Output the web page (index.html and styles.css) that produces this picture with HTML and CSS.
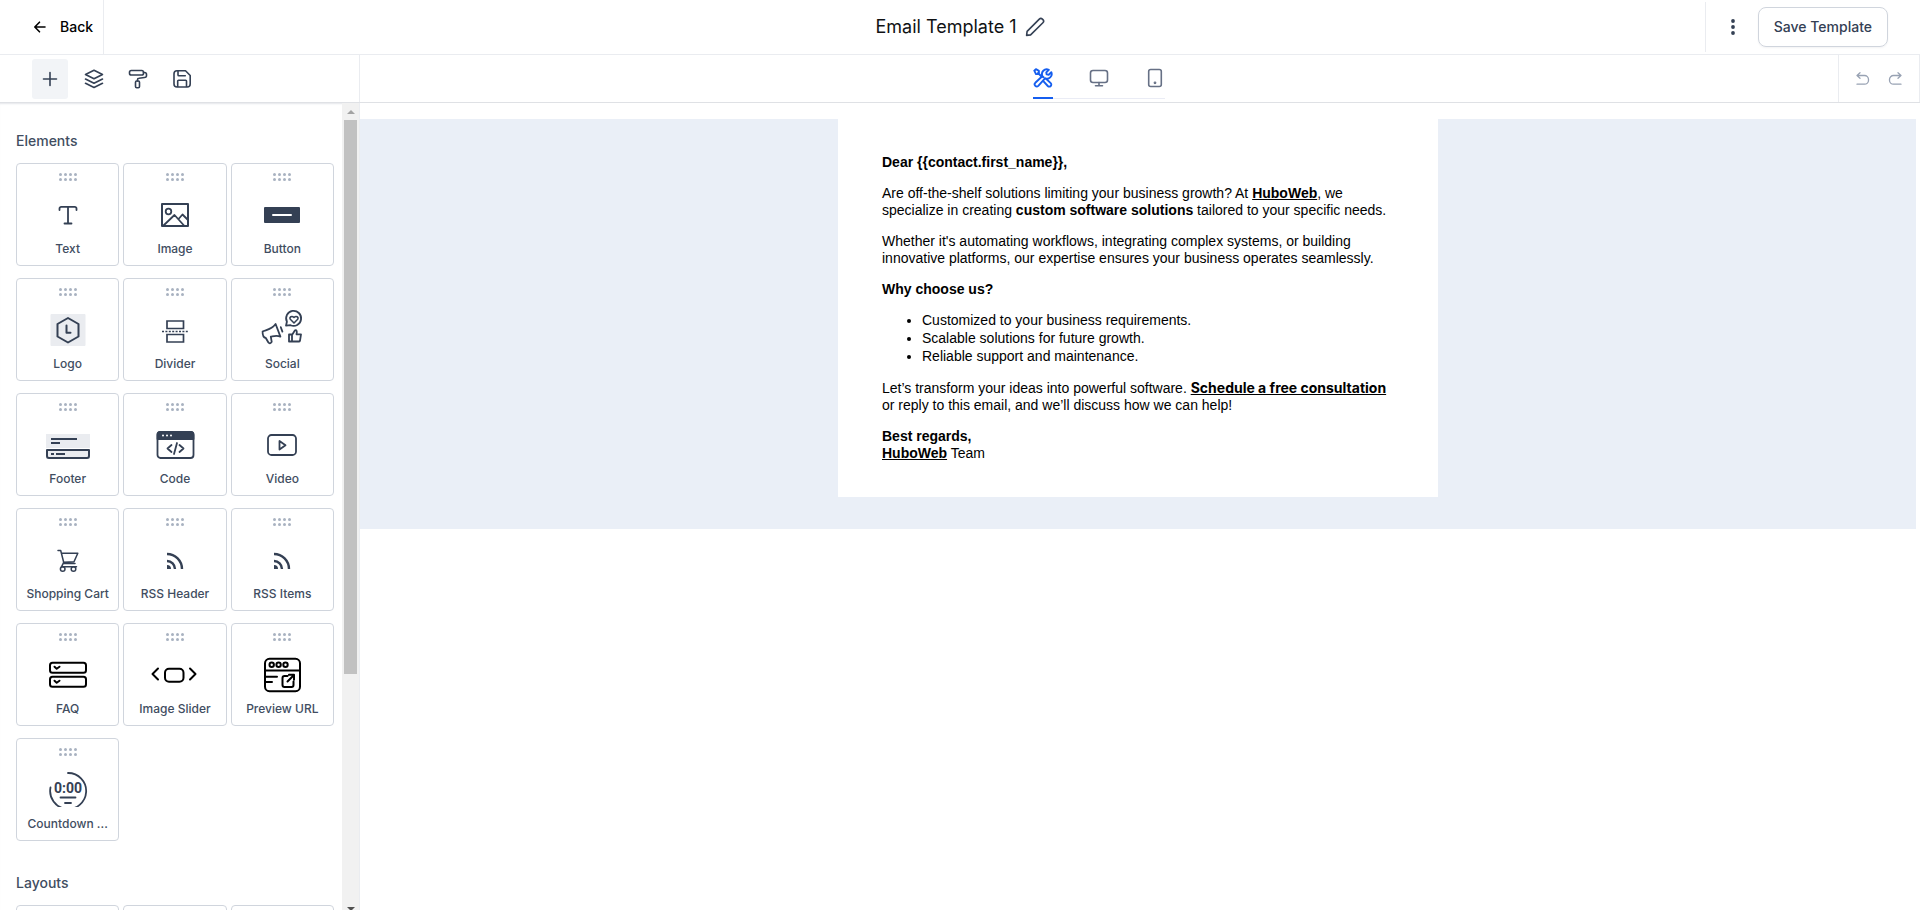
FILE: index.html
```html
<!DOCTYPE html>
<html lang="en">
<head>
<meta charset="utf-8">
<title>Email Template 1</title>
<link rel="stylesheet" href="styles.css">
</head>
<body>
<svg class="sprite" aria-hidden="true">
  <symbol id="grip" viewBox="0 0 20 10">
    <circle cx="2.500" cy="2.500" r="1.500"/><circle cx="7.500" cy="2.500" r="1.500"/><circle cx="12.500" cy="2.500" r="1.500"/><circle cx="17.500" cy="2.500" r="1.500"/>
    <circle cx="2.500" cy="7.500" r="1.500"/><circle cx="7.500" cy="7.500" r="1.500"/><circle cx="12.500" cy="7.500" r="1.500"/><circle cx="17.500" cy="7.500" r="1.500"/>
  </symbol>
  <symbol id="rss" viewBox="0 0 44 36">
    <path d="M14 13A15 15 0 0 1 29 28M14 20A8 8 0 0 1 22 28" stroke-width="2.400" stroke-linecap="butt"/>
    <path d="M14 24A4 4 0 0 1 18 28H14Z" fill="currentColor" stroke="none"/>
  </symbol>
</svg>
<div class="app">
  <header class="topbar">
    <div class="topbar-left">
      <button class="back" type="button">
        <svg width="16" height="16" viewBox="0 0 16 16"><path d="M13 8H3M7.500 3.200L2.800 8l4.700 4.800"/></svg>
        Back
      </button>
    </div>
    <div class="topbar-title">
      <h1>Email Template 1</h1>
      <button class="icon-plain" type="button" aria-label="Rename">
        <svg width="20" height="20" viewBox="0 0 20 20"><path d="M1.600 18.400l.5-4L14.300 2.100a2.200 2.200 0 0 1 3.100 0l.500.5a2.200 2.200 0 0 1 0 3.100L5.600 17.900z"/></svg>
      </button>
    </div>
    <div class="topbar-right">
      <div class="actions">
        <button class="icon-plain" type="button" aria-label="More options">
          <svg class="filled" width="20" height="20" viewBox="0 0 20 20"><circle cx="10" cy="4" r="1.900"/><circle cx="10" cy="10" r="1.900"/><circle cx="10" cy="16" r="1.900"/></svg>
        </button>
        <button class="save" type="button">Save Template</button>
      </div>
    </div>
  </header>

  <div class="toolbar">
    <nav class="tools" aria-label="Panels">
      <button class="tool active" type="button" aria-label="Add element"><svg width="20" height="20" viewBox="0 0 20 20"><path d="M10 3.500v13M3.500 10h13"/></svg></button>
      <button class="tool" type="button" aria-label="Layers"><svg width="20" height="20" viewBox="0 0 20 20"><path d="M10 1.300l8.500 4.200L10 9.700 1.500 5.500zM1.500 10l8.500 4.200L18.500 10M1.500 14.300l8.500 4.200 8.500-4.200"/></svg></button>
      <button class="tool" type="button" aria-label="Styles"><svg width="20" height="20" viewBox="0 0 20 20"><rect x="1.500" y="1.500" width="14" height="4.500" rx="1.800"/><path d="M15.500 3.500h1a2 2 0 0 1 2 2v1a2 2 0 0 1-2 2l-5.500.8a1.500 1.500 0 0 0-1.500 1.500v1.200"/><rect x="7.500" y="12" width="4" height="6.800" rx="1.200"/></svg></button>
      <button class="tool" type="button" aria-label="Saved blocks"><svg width="20" height="20" viewBox="0 0 20 20"><path d="M5 1.800h8.500l4.700 4.700V15a3 3 0 0 1-3 3H5a3 3 0 0 1-3-3V4.800a3 3 0 0 1 3-3zM6 1.800V6a.8.800 0 0 0 .8.800h6.500M5.700 18v-6a.8.800 0 0 1 .8-.8h7.200a.8.800 0 0 1 .8.800v6"/></svg></button>
    </nav>
    <div class="views">
      <div class="tabs" role="tablist">
        <button class="tab active" type="button" role="tab" aria-label="Edit">
          <svg width="20" height="20" viewBox="0 0 20 20"><path d="M5 5l4 4M1.300 2.700l1.600-1.500 3 1.700v2.400l-.8.800H3zM10.500 9.200L9.600 8.300A4.700 4.700 0 0 1 15.800 1.800L13.300 4.300l.3 2.100 2.100.3 2.600-2.500a4.700 4.700 0 0 1-6.300 6.100L5.300 17.800a2 2 0 0 1-3-3L8.700 8.800M12.800 10.500l4.900 4.600a2 2 0 0 1-2.900 2.900l-4.500-4.900"/></svg>
        </button>
        <button class="tab" type="button" role="tab" aria-label="Desktop preview">
          <svg width="20" height="20" viewBox="0 0 20 20"><rect x="1.500" y="2.500" width="17" height="12" rx="2.500"/><path d="M10 14.500v3M6.500 17.700h7"/></svg>
        </button>
        <button class="tab" type="button" role="tab" aria-label="Mobile preview">
          <svg width="20" height="20" viewBox="0 0 20 20"><rect x="3.700" y="1.500" width="12.600" height="17" rx="2"/><circle cx="10" cy="14.800" r=".6"/></svg>
        </button>
      </div>
    </div>
    <div class="history">
      <button class="icon-plain" type="button" aria-label="Undo"><svg width="16" height="16" viewBox="0 0 16 16"><path d="M5 1.800L2 4.500l3 2.700M2 4.500h7.500a4 4 0 0 1 4 4v.700a4 4 0 0 1-4 4H2"/></svg></button>
      <button class="icon-plain" type="button" aria-label="Redo"><svg width="16" height="16" viewBox="0 0 16 16"><path d="M11 1.800l3 2.700-3 2.700M14 4.500H6.500a4 4 0 0 0-4 4v.700a4 4 0 0 0 4 4H14"/></svg></button>
    </div>
  </div>

  <div class="workspace">
    <aside class="sidebar">
      <div class="panel">
        <h2>Elements</h2>
        <div class="grid">
          <button class="card" type="button"><svg class="grip"><use href="#grip"/></svg>
            <svg class="icon" viewBox="0 0 44 36"><path d="M13.500 14v-1.500a1.700 1.700 0 0 1 1.700-1.700h13.600a1.700 1.700 0 0 1 1.700 1.700V14M22 11v16.300M18.500 27.500h7"/></svg>
            <span>Text</span></button>
          <button class="card" type="button"><svg class="grip"><use href="#grip"/></svg>
            <svg class="icon" viewBox="0 0 44 36"><path d="M9 8h26v22H9z" stroke-width="2"/><circle cx="15.500" cy="15.500" r="2.800"/><path d="M10.500 29.500L21.500 19l9.500 10.500M25.500 23l4-4.500 5 5"/></svg>
            <span>Image</span></button>
          <button class="card" type="button"><svg class="grip"><use href="#grip"/></svg>
            <svg class="icon" viewBox="0 0 44 36"><rect x="4" y="11" width="36" height="16" rx="1" fill="currentColor" stroke="none"/><path d="M13 19h18" class="paper"/></svg>
            <span>Button</span></button>

          <button class="card" type="button"><svg class="grip"><use href="#grip"/></svg>
            <svg class="icon" viewBox="0 0 44 36"><rect class="tint" x="4.500" y="3" width="35" height="32" rx="1"/><path d="M22 7l10.500 6v12.500l-10.500 6-10.500-6V13z" stroke-width="2"/><path d="M20.500 14.500v7.200h4" stroke-width="2"/></svg>
            <span>Logo</span></button>
          <button class="card" type="button"><svg class="grip"><use href="#grip"/></svg>
            <svg class="icon" viewBox="0 0 44 36"><path d="M14 10h16.500v7.500H14zM14 23.500h16.500v7.500H14z" stroke-width="1.700" stroke-linejoin="miter"/><path d="M9 20.500h26" stroke-width="1.500" stroke-linecap="butt" stroke-dasharray="2 1.400"/></svg>
            <span>Divider</span></button>
          <button class="card" type="button"><svg class="grip"><use href="#grip"/></svg>
            <svg class="icon" viewBox="0 0 44 36"><path d="M2.600 20.500c3-1.700 8.500-1.500 13-7.500l4.800 12.600c-3.500-1.700-6.500-.6-9.600 0l.9 5.300c-1 1.700-2.500 1.700-3.300.6L5.800 27c-2-.4-3.300-2.600-3.200-6.500zM20.800 16.200l1.600 4.400"/><path d="M26 14.700l.9-4A7.500 7.500 0 1 1 30.500 14.200z"/><path d="M34 12l-3.700-3.700c-1.200-2.100 1.500-4.100 3.700-1.800 2.200-2.300 4.900-.3 3.700 1.800z" stroke-width="1.500"/><path d="M29 23.500h3v7h-3zM32 24l3-4.700c1.700-.3 2.300.8 1.500 4H41l-1 6.300a1.300 1.300 0 0 1-1.300.9H32" stroke-width="1.800"/></svg>
            <span>Social</span></button>

          <button class="card" type="button"><svg class="grip"><use href="#grip"/></svg>
            <svg class="icon" viewBox="0 0 44 36"><rect class="tint" x="0" y="8" width="44" height="14"/><path class="tint" d="M0 24h44v9H0z"/><path d="M5 13h26M5 17h9M5 28h3M10 28h9" stroke-width="2" stroke-linecap="butt"/><path d="M1 24h42v6a2 2 0 0 1-2 2H3a2 2 0 0 1-2-2z" stroke-width="2"/></svg>
            <span>Footer</span></button>
          <button class="card" type="button"><svg class="grip"><use href="#grip"/></svg>
            <svg class="icon" viewBox="0 0 44 36"><rect x="4.500" y="6" width="36" height="26" rx="3"/><path d="M4.500 13V8.500a2.500 2.500 0 0 1 2.500-2.500h31a2.500 2.500 0 0 1 2.500 2.500V13z" fill="currentColor"/><path d="M10 9.500h.01M14 9.500h.01M18 9.500h.01" class="paper"/><path d="M18.500 19l-4 3.500 4 3.500M26.500 19l4 3.500-4 3.500M24 17l-3 11"/></svg>
            <span>Code</span></button>
          <button class="card" type="button"><svg class="grip"><use href="#grip"/></svg>
            <svg class="icon" viewBox="0 0 44 36"><rect x="8" y="9" width="28" height="20" rx="3.500"/><path d="M19.500 15v8.500l6-4.200z"/></svg>
            <span>Video</span></button>

          <button class="card" type="button"><svg class="grip"><use href="#grip"/></svg>
            <svg class="icon" viewBox="0 0 44 36"><path d="M12 9.500h2.700l3.300 13h11M15.300 12.200h16.500l-3.800 8.600-10.200.4-2.300 4.600h15" stroke-width="1.500"/><circle cx="16.700" cy="28" r="2.300" stroke-width="1.500"/><circle cx="27.500" cy="28" r="2.300" stroke-width="1.500"/></svg>
            <span>Shopping Cart</span></button>
          <button class="card" type="button"><svg class="grip"><use href="#grip"/></svg>
            <svg class="icon"><use href="#rss"/></svg>
            <span>RSS Header</span></button>
          <button class="card" type="button"><svg class="grip"><use href="#grip"/></svg>
            <svg class="icon"><use href="#rss"/></svg>
            <span>RSS Items</span></button>

          <button class="card" type="button"><svg class="grip"><use href="#grip"/></svg>
            <svg class="icon ink" viewBox="0 0 44 36"><rect x="4" y="6.800" width="36" height="10" rx="2.500"/><rect x="4" y="20.800" width="36" height="10" rx="2.500"/><path d="M8.500 10.700l2.200 2 2.800-2M8.500 24.700l2.200 2 2.800-2"/></svg>
            <span>FAQ</span></button>
          <button class="card" type="button"><svg class="grip"><use href="#grip"/></svg>
            <svg class="icon ink" viewBox="0 0 44 36"><rect x="12" y="12.800" width="18.500" height="13" rx="4"/><path d="M5 12.500L-.5 18l5.500 5.500M37 12.500l5.500 5.500-5.500 5.500"/></svg>
            <span>Image Slider</span></button>
          <button class="card" type="button"><svg class="grip"><use href="#grip"/></svg>
            <svg class="icon ink" viewBox="0 0 44 36"><rect x="5" y="2.800" width="35" height="32.400" rx="4.500"/><path d="M5 14.500h35M5 20.800h12M5 26h7M27.500 20h-3a2 2 0 0 0-2 2v7a2 2 0 0 0 2 2h7a2 2 0 0 0 2-2v-3.500M27.500 25.500l6.500-6.500M29 18.800h5v5"/><circle cx="11.700" cy="8.700" r="2.200"/><circle cx="18.600" cy="8.700" r="2.200"/><circle cx="25.500" cy="8.700" r="2.200"/></svg>
            <span>Preview URL</span></button>

          <button class="card" type="button"><svg class="grip"><use href="#grip"/></svg>
            <svg class="icon clip" viewBox="0 0 44 36"><path d="M22 2a18 18 0 1 1-17.500 14.500" stroke-width="1.800"/><path d="M14.500 26.500h15M19 32h6" stroke-width="1.800"/><text class="timer" x="22" y="22" text-anchor="middle">0:00</text></svg>
            <span>Countdown ...</span></button>
        </div>
        <h2>Layouts</h2>
        <div class="grid">
          <button class="card" type="button" aria-label="One column"></button>
          <button class="card" type="button" aria-label="Two columns"></button>
          <button class="card" type="button" aria-label="Three columns"></button>
        </div>
      </div>
      <div class="scrollbar">
        <i class="arrow up"></i>
        <div class="track"><div class="thumb"></div></div>
        <i class="arrow down"></i>
      </div>
    </aside>

    <main class="stage">
      <div class="canvas">
        <article class="email">
          <p><b>Dear {{contact.first_name}},</b></p>
          <p>Are off-the-shelf solutions limiting your business growth? At <a href="#">HuboWeb</a>, we specialize in creating <b>custom software solutions</b> tailored to your specific needs.</p>
          <p>Whether it's automating workflows, integrating complex systems, or building innovative platforms, our expertise ensures your business operates seamlessly.</p>
          <p><b>Why choose us?</b></p>
          <ul>
            <li>Customized to your business requirements.</li>
            <li>Scalable solutions for future growth.</li>
            <li>Reliable support and maintenance.</li>
          </ul>
          <p>Let’s transform your ideas into powerful software. <a class="cta" href="#">Schedule a free consultation</a> or reply to this email, and we’ll discuss how we can help!</p>
          <p><b>Best regards,</b><br><a href="#">HuboWeb</a> Team</p>
        </article>
      </div>
    </main>
  </div>
</div>
</body>
</html>
```
FILE: styles.css
```css
* { box-sizing: border-box; }

body {
  margin: 0;
  background: #fff;
  color: #344054;
  font-family: Inter, "Liberation Sans", sans-serif;
  overflow: hidden;
}

button {
  margin: 0;
  padding: 0;
  border: 0;
  background: none;
  color: inherit;
  font: inherit;
  cursor: pointer;
}

svg {
  display: block;
  fill: none;
  stroke: currentColor;
  stroke-width: 1.6;
  stroke-linecap: round;
  stroke-linejoin: round;
}

.sprite { position: absolute; width: 0; height: 0; }
.filled { fill: currentColor; stroke: none; }

.app {
  display: flex;
  flex-direction: column;
  height: 100vh;
}

.topbar {
  display: grid;
  grid-template-columns: 1fr auto 1fr;
  flex: none;
  height: 55px;
  border-bottom: 1px solid #eaecf0;
}

.topbar-left { display: flex; }

.back {
  display: flex;
  align-items: center;
  gap: 12px;
  padding: 0 10px 1px 32px;
  border-right: 1px solid #eaecf0;
  color: #000;
  font-size: 14px;
  font-weight: 500;
}

.topbar-title {
  display: flex;
  align-items: center;
  gap: 8px;
  padding-bottom: 1px;
}

.topbar-title h1 {
  margin: 0;
  color: #101214;
  font-size: 18px;
  font-weight: 400;
}

.topbar-right {
  display: flex;
  align-items: center;
  justify-content: flex-end;
}

.actions {
  display: flex;
  align-items: center;
  gap: 15px;
  height: 50px;
  padding: 0 32px 0 17px;
  border-left: 1px solid #eaecf0;
}

.save {
  height: 40px;
  padding: 0 15px 1px;
  border: 1px solid #d0d5dd;
  border-radius: 8px;
  box-shadow: 0 1px 2px rgba(16, 24, 40, .05);
  font-size: 14px;
  font-weight: 500;
}

.toolbar {
  display: flex;
  flex: none;
  height: 48px;
  border-bottom: 1px solid #dfe1e5;
}

.tools {
  display: flex;
  flex: none;
  align-items: center;
  gap: 8px;
  width: 360px;
  padding-left: 32px;
  border-right: 1px solid #eaecf0;
}

.tool {
  display: grid;
  place-items: center;
  width: 36px;
  height: 40px;
  border-radius: 3px;
}

.tool.active { background: #f2f4f7; }

.views {
  display: flex;
  flex: 1;
  justify-content: center;
  align-items: flex-end;
  padding-bottom: 3px;
}

.tabs {
  display: flex;
  gap: 36px;
  box-shadow: inset 0 -1px #eaecf5;
  color: #667085;
}

.tab {
  width: 20px;
  height: 31px;
  padding-bottom: 9px;
  border-bottom: 2px solid transparent;
}

.tab.active {
  border-color: #155eef;
  color: #155eef;
}

.tab.active svg { stroke-width: 1.9; }

.history {
  display: flex;
  align-items: center;
  gap: 16px;
  padding: 0 16px;
  border-left: 1px solid #eaecf0;
  border-right: 1px solid #eaecf0;
  color: #98a2b3;
}

.history svg { stroke-width: 1.3; }

.workspace {
  display: flex;
  flex: 1;
  min-height: 0;
}

.sidebar {
  display: flex;
  flex: none;
  width: 360px;
  border-right: 1px solid #eaecf0;
  overflow: hidden;
  box-shadow: inset 0 2px 2px -1px #e4e6ea;
}

.panel {
  flex: 1;
  padding: 28px 8px 0 16px;
}

.panel h2 {
  margin: 0 0 12px;
  color: #414d61;
  font-size: 14px;
  font-weight: 500;
  line-height: 20px;
}

.grid {
  display: grid;
  grid-template-columns: repeat(3, 1fr);
  grid-auto-rows: 103px;
  gap: 12px 4px;
}

.grid + h2 { margin-top: 32px; }

.card {
  display: flex;
  flex-direction: column;
  align-items: center;
  padding-top: 8px;
  border: 1px solid #d0d5dd;
  border-radius: 4px;
  font-size: 12px;
  font-weight: 500;
  line-height: 18px;
}

.card span { color: #414d61; }

.grip {
  width: 20px;
  height: 10px;
  fill: #a9b2c1;
  stroke: none;
}

.icon {
  width: 44px;
  height: 36px;
  margin: 14px 0 8px;
  overflow: visible;
  stroke-width: 1.8;
}

.icon.ink { color: #000; stroke-width: 2; }
.icon.clip { overflow: hidden; }
.icon .tint { fill: #eaecf0; stroke: none; }
.icon .paper { stroke: #fff; stroke-width: 2; }

.timer {
  fill: currentColor;
  stroke: none;
  font: 700 14px Roboto, sans-serif;
}

.scrollbar {
  display: flex;
  flex-direction: column;
  width: 17px;
  margin-bottom: -7px;
  background: #f1f1f1;
}

.arrow {
  flex: none;
  width: 8px;
  margin: 7px auto 6px;
  border: 4px solid transparent;
}

.arrow.up { border-top: 0; border-bottom-color: #a3a3a3; }
.arrow.down { border-bottom: 0; border-top-color: #505050; }

.track { flex: 1; padding: 0 2px; }

.thumb {
  height: 71%;
  background: #c1c1c1;
}

.stage {
  flex: 1;
  padding: 16px 4px 0 0;
}

.canvas {
  padding-bottom: 32px;
  background: #eaeff7;
}

.email {
  max-width: 600px;
  margin: 0 auto;
  padding: 35px 44px;
  background: #fff;
  color: #000;
  font: 14px/17px "Liberation Sans", Arial, sans-serif;
}

.email p, .email ul { margin: 0 0 14px; }
.email ul { padding-left: 40px; }
.email li + li { margin-top: 1px; }
.email p:last-child { margin-bottom: 0; }
.email a { color: inherit; font-weight: 700; }
.email .cta { font-family: Inter, "Liberation Sans", sans-serif; }
```
